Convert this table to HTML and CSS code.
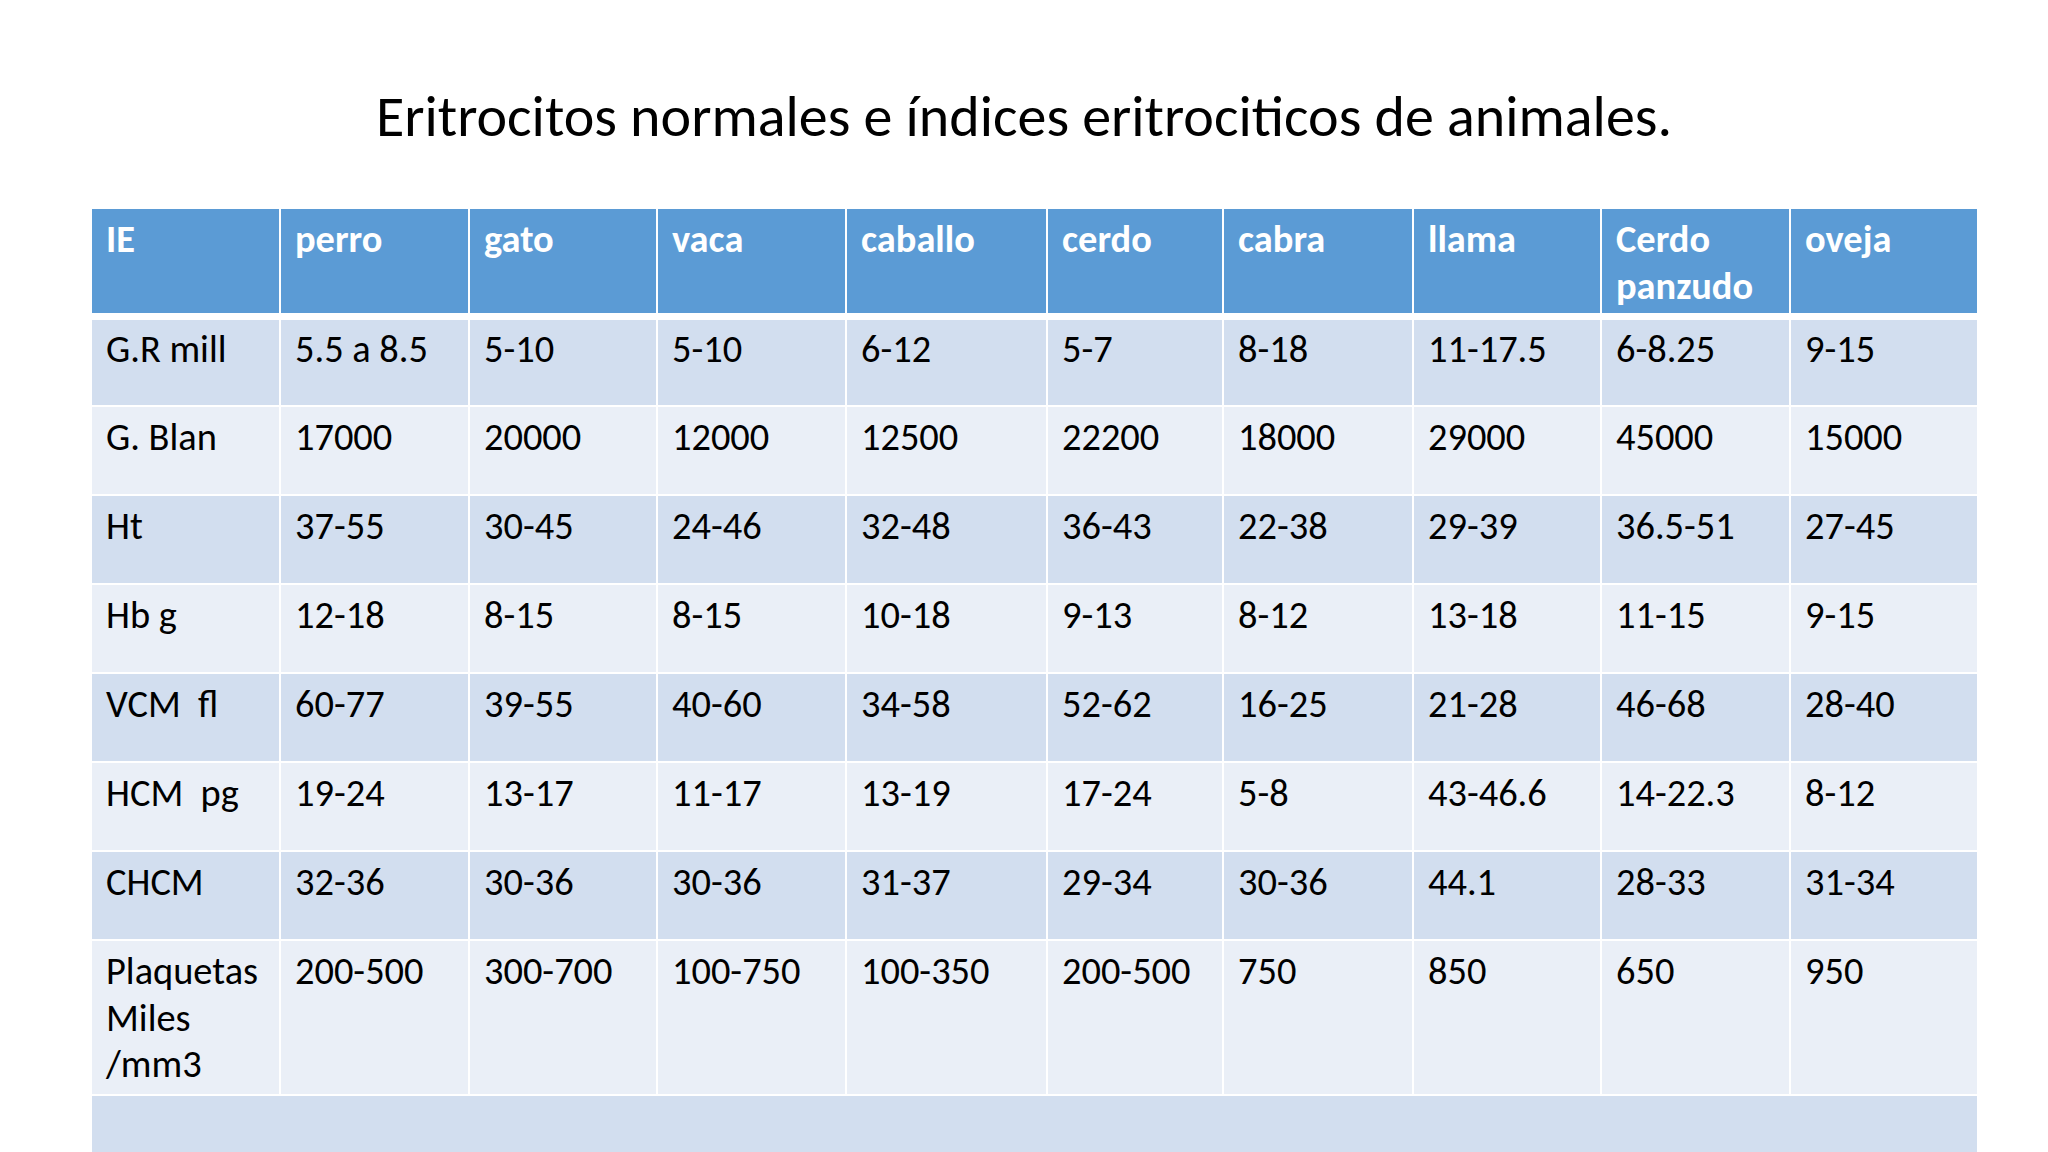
FILE: index.html
```html
<!DOCTYPE html>
<html lang="es">
<head>
<meta charset="utf-8">
<title>Eritrocitos normales e índices eritrociticos de animales.</title>
<link rel="stylesheet" href="styles.css">
</head>
<body>
<div class="slide">
  <h1 class="title">Eritrocitos normales e índices eritrociticos de animales.</h1>
  <table class="grid">
    <colgroup>
      <col class="c1"><col class="c2"><col class="c3"><col class="c4"><col class="c5">
      <col class="c6"><col class="c7"><col class="c8"><col class="c9"><col class="c10">
    </colgroup>
    <thead>
      <tr class="head">
        <th>IE</th><th>perro</th><th>gato</th><th>vaca</th><th>caballo</th>
        <th>cerdo</th><th>cabra</th><th>llama</th><th>Cerdo panzudo</th><th>oveja</th>
      </tr>
    </thead>
    <tbody>
      <tr class="dark first">
        <td>G.R mill</td><td>5.5 a 8.5</td><td>5-10</td><td>5-10</td><td>6-12</td>
        <td>5-7</td><td>8-18</td><td>11-17.5</td><td>6-8.25</td><td>9-15</td>
      </tr>
      <tr class="light">
        <td>G. Blan</td><td>17000</td><td>20000</td><td>12000</td><td>12500</td>
        <td>22200</td><td>18000</td><td>29000</td><td>45000</td><td>15000</td>
      </tr>
      <tr class="dark">
        <td>Ht</td><td>37-55</td><td>30-45</td><td>24-46</td><td>32-48</td>
        <td>36-43</td><td>22-38</td><td>29-39</td><td>36.5-51</td><td>27-45</td>
      </tr>
      <tr class="light">
        <td>Hb g</td><td>12-18</td><td>8-15</td><td>8-15</td><td>10-18</td>
        <td>9-13</td><td>8-12</td><td>13-18</td><td>11-15</td><td>9-15</td>
      </tr>
      <tr class="dark">
        <td>VCM&nbsp; fl</td><td>60-77</td><td>39-55</td><td>40-60</td><td>34-58</td>
        <td>52-62</td><td>16-25</td><td>21-28</td><td>46-68</td><td>28-40</td>
      </tr>
      <tr class="light">
        <td>HCM&nbsp; pg</td><td>19-24</td><td>13-17</td><td>11-17</td><td>13-19</td>
        <td>17-24</td><td>5-8</td><td>43-46.6</td><td>14-22.3</td><td>8-12</td>
      </tr>
      <tr class="dark">
        <td>CHCM</td><td>32-36</td><td>30-36</td><td>30-36</td><td>31-37</td>
        <td>29-34</td><td>30-36</td><td>44.1</td><td>28-33</td><td>31-34</td>
      </tr>
      <tr class="light tall">
        <td>Plaquetas<br>Miles<br>/mm3</td><td>200-500</td><td>300-700</td><td>100-750</td><td>100-350</td>
        <td>200-500</td><td>750</td><td>850</td><td>650</td><td>950</td>
      </tr>
      <tr class="dark empty">
        <td colspan="10"></td>
      </tr>
    </tbody>
  </table>
</div>
</body>
</html>
```
FILE: styles.css
```css
html, body {
  margin: 0;
  padding: 0;
  background: #ffffff;
}

.slide {
  width: 2048px;
  height: 1152px;
  overflow: hidden;
  background: #ffffff;
  font-family: "Calibri", "Carlito", "Lato", sans-serif;
  color: #000000;
}

.title {
  margin: 0;
  padding-top: 82px;
  font-size: 58px;
  font-weight: normal;
  line-height: 1.22;
  text-align: center;
  color: #000000;
}

.grid {
  margin: 56px 0 0 92px;
  width: 1885px;
  table-layout: fixed;
  border-collapse: separate;
  border-spacing: 0;
  font-size: 38.4px;
  line-height: 46.8px;
}

.c1 { width: 187px; }
.c2 { width: 189px; }
.c3 { width: 188px; }
.c4 { width: 189px; }
.c5 { width: 201px; }
.c6 { width: 176px; }
.c7 { width: 190px; }
.c8 { width: 188px; }
.c9 { width: 189px; }
.c10 { width: 188px; }

.grid th,
.grid td {
  box-sizing: border-box;
  padding: 7px 8px 0 14px;
  text-align: left;
  vertical-align: top;
  border-left: 2px solid #ffffff;
  border-bottom: 2px solid #ffffff;
  overflow: hidden;
}

.grid th:first-child,
.grid td:first-child {
  border-left: none;
}

.head th {
  height: 111px;
  background: #5b9bd5;
  color: #ffffff;
  font-weight: bold;
  border-bottom: 7px solid #ffffff;
}

.grid td {
  height: 89px;
}

.first td {
  height: 87px;
  padding-top: 6px;
}

.tall td {
  height: 155px;
}

.empty td {
  height: 80px;
  border-bottom: none;
}

.dark td {
  background: #d2deef;
}

.light td {
  background: #eaeff7;
}
```
